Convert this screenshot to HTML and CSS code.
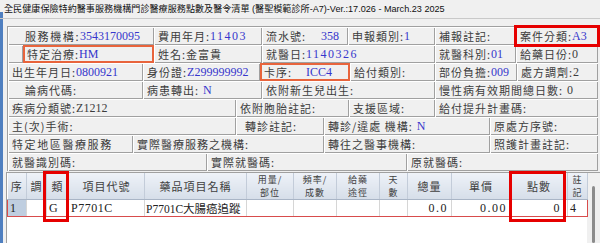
FILE: index.html
```html
<!DOCTYPE html>
<html lang="zh-Hant">
<head>
    <meta charset="UTF-8">
    <meta name="viewport" content="width=device-width, initial-scale=1.0">
    <title>門診醫療服務點數及醫令清單</title>
    <link rel="stylesheet" href="styles.css">
</head>
<body>
    <div class="titlebar">全民健康保險特約醫事服務機構門診醫療服務點數及醫令清單 (醫聖模範診所-A7)-Ver.:17.026 - March.23 2025</div>

    <div class="form">
        <div class="row r1">
            <div class="cell indent"><span class="lbl wide">服務機構:</span><span class="val">3543170095</span></div>
            <div class="cell"><span class="lbl">費用年月:</span><span class="val spaced">11403</span></div>
            <div class="cell"><span class="lbl">流水號:</span><span class="val gap">358</span></div>
            <div class="cell"><span class="lbl">申報類別:</span><span class="val">1</span></div>
            <div class="cell"><span class="lbl">補報註記:</span></div>
            <div class="cell mark-red"><span class="lbl">案件分類:</span><span class="val">A3</span></div>
        </div>
        <div class="row r2">
            <div class="cell"></div>
            <div class="cell mark-orange"><span class="lbl">特定治療:</span><span class="val">HM</span></div>
            <div class="cell"><span class="lbl">姓名:金富貴</span></div>
            <div class="cell"><span class="lbl">就醫日:</span><span class="val spaced">1140326</span></div>
            <div class="cell"><span class="lbl">就醫科別:</span><span class="val">01</span></div>
            <div class="cell"><span class="lbl">給藥日份:</span><span class="val plain">0</span></div>
        </div>
        <div class="row r3">
            <div class="cell"><span class="lbl">出生年月日:</span><span class="val">0800921</span></div>
            <div class="cell"><span class="lbl">身份證:</span><span class="val">Z299999992</span></div>
            <div class="cell mark-orange"><span class="lbl">卡序:</span><span class="val gap-sm">ICC4</span></div>
            <div class="cell"><span class="lbl">給付類別:</span></div>
            <div class="cell"><span class="lbl">部份負擔:</span><span class="val">009</span></div>
            <div class="cell"><span class="lbl">處方調劑:</span><span class="val plain">2</span></div>
        </div>
        <div class="row r4">
            <div class="cell indent"><span class="lbl">論病代碼:</span></div>
            <div class="cell"><span class="lbl">病患轉出:</span><span class="val pad">N</span></div>
            <div class="cell"><span class="lbl">依附新生兒出生:</span></div>
            <div class="cell"><span class="lbl">慢性病有效期間總日數:</span><span class="val plain pad">0</span></div>
        </div>
        <div class="row r5">
            <div class="cell"><span class="lbl">疾病分類號:</span><span class="val plain">Z1212</span></div>
            <div class="cell"><span class="lbl">依附胞胎註記:</span></div>
            <div class="cell"><span class="lbl">支援區域:</span></div>
            <div class="cell"><span class="lbl">給付提升計畫碼:</span></div>
        </div>
        <div class="row r6">
            <div class="cell"><span class="lbl">主(次)手術:</span></div>
            <div class="cell inset"><span class="lbl">轉診註記:</span></div>
            <div class="cell"><span class="lbl">轉診/違處 機構:</span><span class="val pad">N</span></div>
            <div class="cell"><span class="lbl">原處方序號:</span></div>
        </div>
        <div class="row r7">
            <div class="cell"><span class="lbl wide">特定地區醫療服務</span></div>
            <div class="cell"><span class="lbl">實際醫療服務之機構:</span></div>
            <div class="cell"><span class="lbl">轉往之醫事機構:</span></div>
            <div class="cell"><span class="lbl">照護計畫註記:</span></div>
        </div>
        <div class="row r8">
            <div class="cell"><span class="lbl">就醫識別碼:</span></div>
            <div class="cell"><span class="lbl">實際就醫碼:</span></div>
            <div class="cell"><span class="lbl">原就醫碼:</span></div>
        </div>
    </div>

    <div class="grid">
        <div class="grid-body">
            <table>
                <colgroup>
                    <col style="width:19px"><col style="width:20px"><col style="width:22px">
                    <col style="width:76px"><col style="width:102px"><col style="width:47px">
                    <col style="width:43px"><col style="width:43px"><col style="width:28px">
                    <col style="width:44px"><col style="width:59px"><col style="width:57px">
                    <col style="width:20px">
                </colgroup>
                <thead>
                    <tr>
                        <th>序</th>
                        <th>調</th>
                        <th>類</th>
                        <th>項目代號</th>
                        <th>藥品項目名稱</th>
                        <th class="two">用量/<br>部位</th>
                        <th class="two">頻率/<br>成數</th>
                        <th class="two">給藥<br>途徑</th>
                        <th class="two">天<br>數</th>
                        <th>總量</th>
                        <th>單價</th>
                        <th>點數</th>
                        <th class="two">註<br>記</th>
                    </tr>
                </thead>
                <tbody>
                    <tr class="selected">
                        <td class="seq">1</td>
                        <td></td>
                        <td>G</td>
                        <td>P7701C</td>
                        <td class="name">P7701C大腸癌追蹤</td>
                        <td></td>
                        <td></td>
                        <td></td>
                        <td></td>
                        <td class="num">0.0</td>
                        <td class="num">0.00</td>
                        <td class="num pts">0</td>
                        <td>4</td>
                    </tr>
                </tbody>
            </table>
            <div class="mark mark-kind"></div>
            <div class="mark mark-points"></div>
        </div>
        <div class="vscroll"><div class="thumb"></div></div>
    </div>
</body>
</html>
```

FILE: styles.css
```css
html, body { margin: 0; height: 243px; overflow: hidden; }
body {
    font-family: "Liberation Serif", "Noto Sans CJK TC", serif;
    background: #f0f0f0 linear-gradient(#4f7fc0, #4f7fc0) no-repeat 0 12px / 3px 100%;
    color: #3c3c3c;
}

.titlebar {
    height: 18px; line-height: 19px; padding-left: 4px;
    font-family: "Liberation Sans", "Noto Sans CJK TC", sans-serif;
    font-size: 9.1px; color: #111; white-space: nowrap;
    border-bottom: 1px solid #c9c9c9;
}

.form { margin: 7px 2px 0 7px; border-top: 1px solid #a0a0a0; border-left: 1px solid #a0a0a0; }
.row { display: grid; height: 18px; }
.r1 { grid-template-columns: 146px 108px 86px 87px 81px 1fr; }
.r2 { grid-template-columns: 15px 131px 108px 173px 81px 1fr; }
.r3 { grid-template-columns: 135px 117px 90px 85px 82px 1fr; }
.r4 { grid-template-columns: 135px 119px 173px 1fr; }
.r5 { grid-template-columns: 228px 113px 86px 1fr; }
.r6 { grid-template-columns: 228px 88px 166px 1fr; }
.r7 { grid-template-columns: 125px 191px 166px 1fr; }
.r8 { grid-template-columns: 199px 200px 1fr; }

.cell {
    display: flex; align-items: center; padding-left: 4px; white-space: nowrap;
    line-height: 1; box-shadow: inset 1px 1px #fff, inset -1px -1px #a0a0a0;
}
.cell.indent { padding-left: 17px; }
.cell.inset { padding-left: 9px; }
.mark-orange { outline: 2px solid #e8643c; outline-offset: -2px; }
.mark-red { outline: 3px solid #e60000; outline-offset: -1px; position: relative; z-index: 1; }

.lbl { font-family: "Noto Sans CJK TC", sans-serif; font-size: 11px; letter-spacing: 1px; color: #3c3c3c; }
.lbl.wide { letter-spacing: 1.6px; }
.val { font-size: 12px; color: #3636cc; }
.val.plain { color: #3c3c3c; }
.val.spaced { letter-spacing: 1.5px; }
.val.gap { margin-left: 15px; }
.val.gap-sm { margin-left: 14px; }
.val.pad { margin-left: 4px; }

.grid {
    display: flex; margin: 1px 0 0 6px; height: 70px;
    border-top: 1px solid #a0a0a0; border-left: 1px solid #a0a0a0;
}
.grid-body { position: relative; width: 580px; background: #fff; }
table { width: 580px; table-layout: fixed; border-collapse: collapse; }
th {
    height: 26px; padding: 0; font-weight: normal;
    font-family: "Noto Sans CJK TC", sans-serif; font-size: 11px; line-height: 12px; letter-spacing: 1px;
    color: #404040; background: linear-gradient(#eef2f8, #d6dee9);
    border-right: 1px solid #c3ccd9; border-bottom: 1px solid #a9b5c6;
}
th.two { font-size: 9px; line-height: 13px; }
td {
    height: 13px; padding: 0 2px; font-size: 12px; color: #222; letter-spacing: 0.5px;
    white-space: nowrap; overflow: hidden; border-right: 1px solid #d6d6d6;
}
td.name { letter-spacing: 0; font-size: 11.5px; padding-left: 1px; }
tr.selected td { border-top: 1px solid #d84c4c; border-bottom: 1px solid #d84c4c; }
tr.selected td:first-child { border-left: 1px solid #d84c4c; }
tr.selected td:last-child { border-right: 1px solid #d84c4c; }
td.seq { background: #bfcee0; }
td.num { text-align: right; letter-spacing: 1.5px; padding-right: 3px; }
td.pts { padding-right: 6px; }

.mark { position: absolute; top: -2px; height: 51px; box-sizing: border-box; border: 3px solid #e60000; }
.mark-kind { left: 36px; width: 26px; }
.mark-points { left: 502px; width: 57px; }

.vscroll { flex: 1; box-sizing: border-box; padding: 13px 0 0 5px; background: #f0f0f0; }
.thumb { width: 3px; height: 100%; background: #8c8c8c; border-radius: 2px; }
```
